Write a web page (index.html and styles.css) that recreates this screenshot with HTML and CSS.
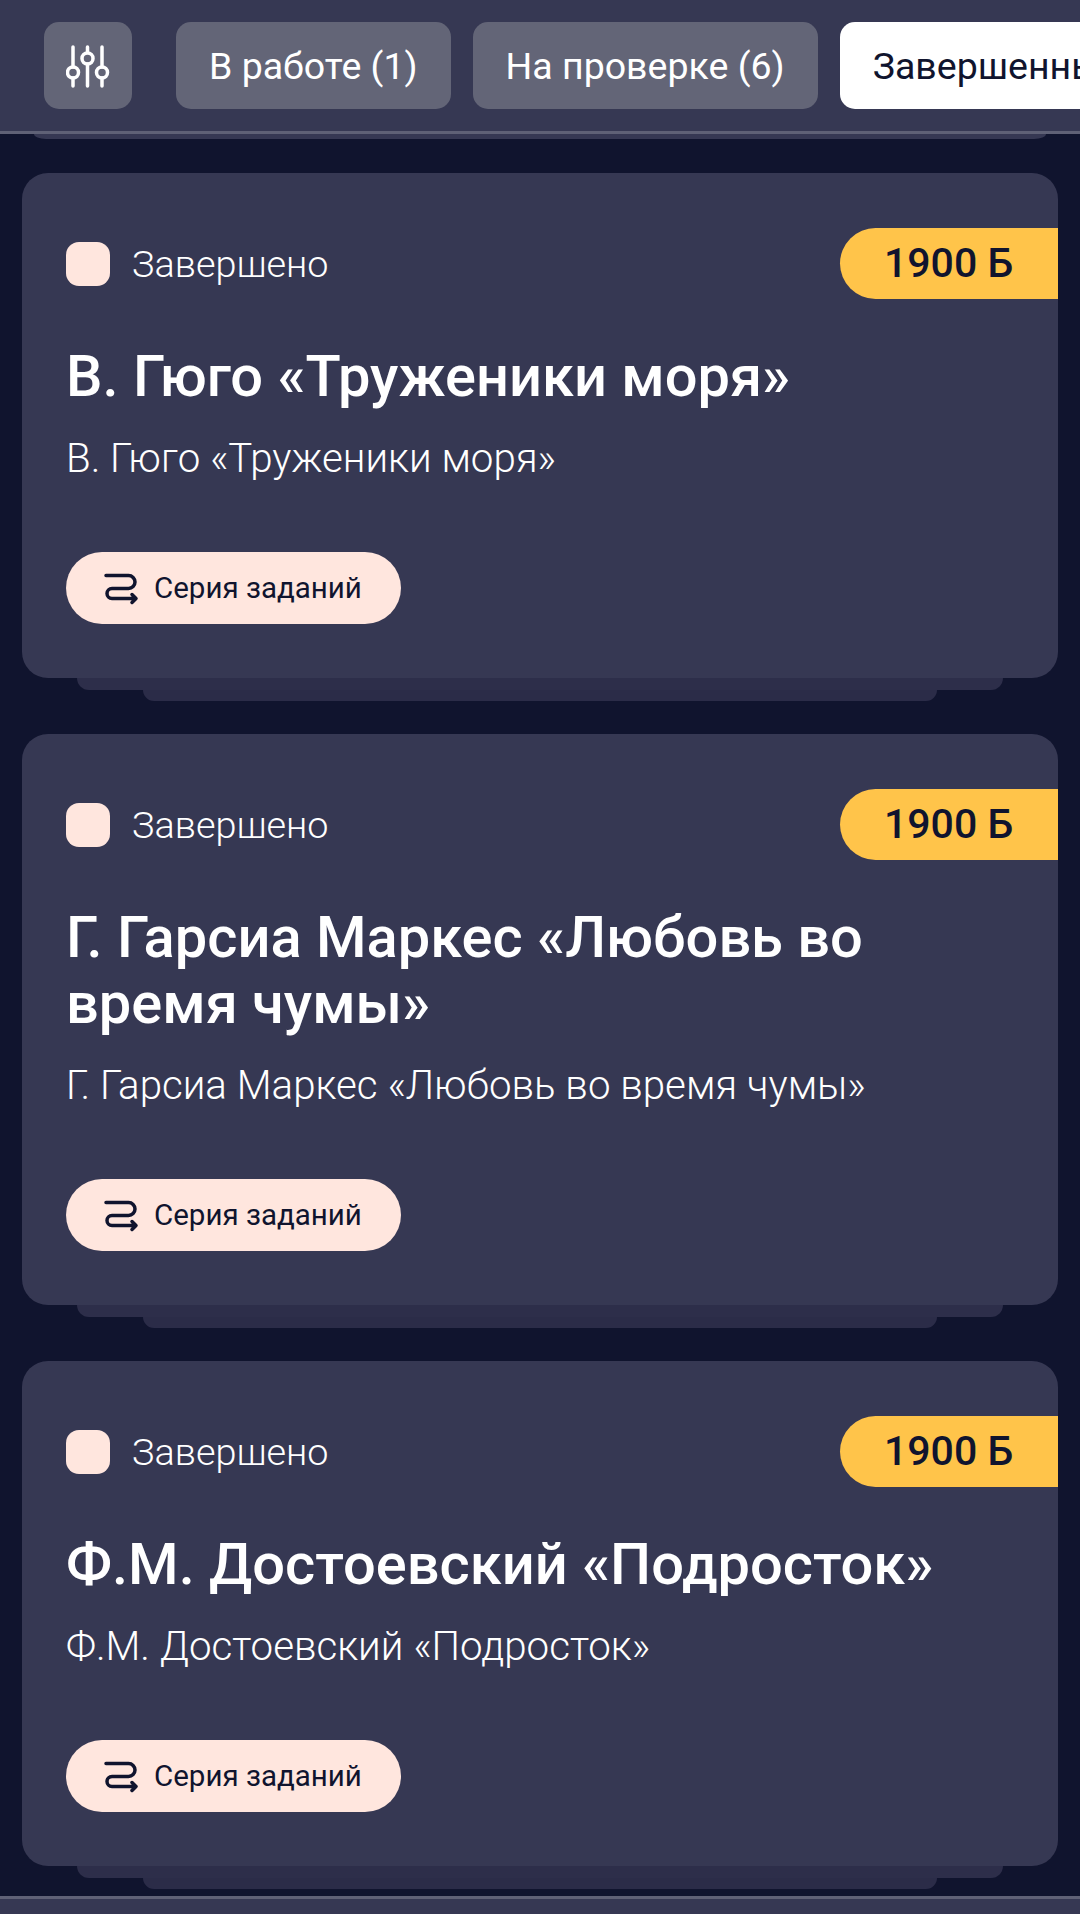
FILE: index.html
```html
<!DOCTYPE html>
<html lang="ru">
<head>
<meta charset="utf-8">
<title>Задания</title>
<link rel="stylesheet" href="styles.css">
</head>
<body>
<div class="page">
  <header class="topbar">
    <button class="chip chip-icon" aria-label="Фильтр">
      <svg class="filter-icon" viewBox="0 0 44 44" width="44" height="44" fill="none" stroke="#fff" stroke-width="3.500" stroke-linecap="round">
        <path d="M7 3V23M7 34V42M21.500 3V8M21.500 20V42M36 3V23M36 34V42"/>
        <circle cx="7" cy="28.500" r="5.500"/><circle cx="21.500" cy="14.500" r="5.500"/><circle cx="36" cy="28.500" r="5.500"/>
      </svg>
    </button>
    <button class="chip">В работе (1)</button>
    <button class="chip">На проверке (6)</button>
    <button class="chip chip-active">Завершенные (12)</button>
  </header>
  <main class="list">
    <div class="peek"></div>

    <section class="task">
      <article class="card">
        <div class="card-head">
          <div class="status"><span class="status-box"></span><span class="status-text">Завершено</span></div>
          <div class="points">1900 Б</div>
        </div>
        <h2 class="title">В. Гюго «Труженики моря»</h2>
        <p class="desc">В. Гюго «Труженики моря»</p>
        <div class="pill">
          <svg class="series-icon" viewBox="0 0 34 30" width="34" height="30" fill="none" stroke="#10142e" stroke-width="3.500" stroke-linecap="round" stroke-linejoin="round">
            <path d="M2 2.500H24.500a6.500 6.500 0 0 1 0 13H8a5 5 0 0 0 0 10H32M28 21.500l4 4-4 4"/>
          </svg>
          <span>Серия заданий</span>
        </div>
      </article>
      <div class="layer layer-one"></div>
      <div class="layer layer-two"></div>
    </section>

    <section class="task">
      <article class="card">
        <div class="card-head">
          <div class="status"><span class="status-box"></span><span class="status-text">Завершено</span></div>
          <div class="points">1900 Б</div>
        </div>
        <h2 class="title">Г. Гарсиа Маркес «Любовь во время чумы»</h2>
        <p class="desc">Г. Гарсиа Маркес «Любовь во время чумы»</p>
        <div class="pill">
          <svg class="series-icon" viewBox="0 0 34 30" width="34" height="30" fill="none" stroke="#10142e" stroke-width="3.500" stroke-linecap="round" stroke-linejoin="round">
            <path d="M2 2.500H24.500a6.500 6.500 0 0 1 0 13H8a5 5 0 0 0 0 10H32M28 21.500l4 4-4 4"/>
          </svg>
          <span>Серия заданий</span>
        </div>
      </article>
      <div class="layer layer-one"></div>
      <div class="layer layer-two"></div>
    </section>

    <section class="task">
      <article class="card">
        <div class="card-head">
          <div class="status"><span class="status-box"></span><span class="status-text">Завершено</span></div>
          <div class="points">1900 Б</div>
        </div>
        <h2 class="title">Ф.М. Достоевский «Подросток»</h2>
        <p class="desc">Ф.М. Достоевский «Подросток»</p>
        <div class="pill">
          <svg class="series-icon" viewBox="0 0 34 30" width="34" height="30" fill="none" stroke="#10142e" stroke-width="3.500" stroke-linecap="round" stroke-linejoin="round">
            <path d="M2 2.500H24.500a6.500 6.500 0 0 1 0 13H8a5 5 0 0 0 0 10H32M28 21.500l4 4-4 4"/>
          </svg>
          <span>Серия заданий</span>
        </div>
      </article>
      <div class="layer layer-one"></div>
      <div class="layer layer-two"></div>
    </section>
  </main>
  <footer class="bottombar"></footer>
</div>
</body>
</html>
```
FILE: styles.css
```css
* { box-sizing: border-box; }
html, body { margin: 0; padding: 0; }
body {
  background: #10142e;
  font-family: Roboto, "Liberation Sans", sans-serif;
  color: #fff;
}
.page {
  width: 1080px;
  height: 1914px;
  display: flex;
  flex-direction: column;
  overflow: hidden;
}
.topbar {
  flex: none;
  height: 134px;
  padding: 22px 0 0 44px;
  display: flex;
  align-items: flex-start;
  gap: 22px;
  overflow: hidden;
  background: #363853;
  border-bottom: 3px solid #5f6176;
}
.chip {
  flex: none;
  height: 87px;
  padding: 2px 33px 0;
  border: 0;
  border-radius: 15px;
  background: #636577;
  color: #fff;
  font: 400 37.500px/85px Roboto, sans-serif;
  white-space: nowrap;
}
.chip-icon {
  width: 88px;
  padding: 0;
  margin-right: 22px;
  display: flex;
  align-items: center;
  justify-content: center;
}
.chip-active { background: #fff; color: #10142e; }
.list {
  flex: 1;
  min-height: 0;
  padding: 0 22px;
  display: flex;
  flex-direction: column;
  gap: 33px;
  overflow: hidden;
  background: #10142e;
}
.peek {
  flex: none;
  height: 5px;
  margin: 0 12px 1px 12px;
  background: #363853;
  border-radius: 0 0 12px 12px / 0 0 5px 5px;
}
.task { flex: none; display: flex; flex-direction: column; }
.card {
  padding: 55px 0 54px 44px;
  background: #363853;
  border-radius: 26px;
}
.card-head {
  display: flex;
  align-items: center;
  justify-content: space-between;
}
.status { display: flex; align-items: center; gap: 22px; }
.status-box {
  width: 44px;
  height: 44px;
  background: #ffe6de;
  border-radius: 13px;
}
.status-text {
  font-weight: 300;
  font-size: 37.800px;
  line-height: 44px;
  color: #fff;
}
.points {
  width: 218px;
  height: 71px;
  padding-left: 44px;
  background: #ffc44a;
  border-radius: 36px 0 0 36px;
  color: #10142e;
  font-weight: 500;
  font-size: 41px;
  line-height: 71px;
}
.title {
  margin: 44px 44px 0 0;
  font-weight: 500;
  font-size: 57.800px;
  line-height: 66px;
  color: #fff;
}
.desc {
  margin: 29px 0 0;
  font-weight: 300;
  font-size: 40.250px;
  line-height: 42px;
  color: #fff;
}
.pill {
  width: 335px;
  height: 72px;
  margin-top: 72px;
  padding-left: 38px;
  display: flex;
  align-items: center;
  gap: 16px;
  background: #ffe6de;
  border-radius: 36px;
  color: #10142e;
  font-size: 29.500px;
}
.series-icon { flex: none; overflow: visible; }
.layer { flex: none; height: 11px; border-radius: 0 0 13px 13px; }
.layer-one { margin: 0 55px; background: #2d2e4a; height: 12px; }
.layer-two { margin: 0 121px; background: #2b2c48; }
.bottombar {
  flex: none;
  height: 18px;
  background: #363853;
  border-top: 3px solid #5f6176;
}
```
